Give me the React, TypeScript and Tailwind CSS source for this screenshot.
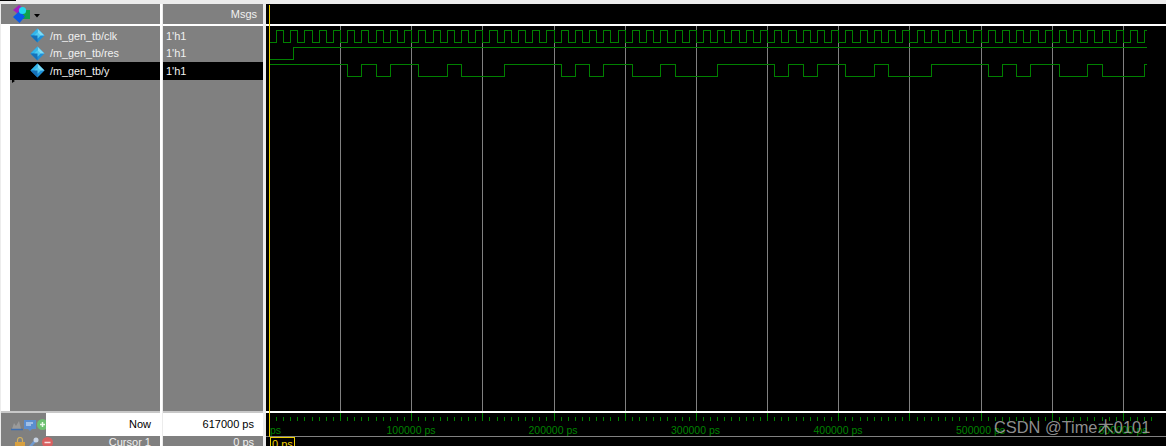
const T0 = 269.3;
const HALF = 7.118;
const END = 1146.5;

const px = (v: number) => Math.floor(v) + 0.5;

// builds a step path from a start level and the x of every toggle
function stepPath(toggles: number[], hi: number, lo: number, startHigh: boolean) {
  let high = startHigh;
  let d = `M${px(T0)} ${high ? hi : lo}`;
  for (const x of toggles) {
    if (x >= END) break;
    d += `H${px(x)}`;
    high = !high;
    d += `V${high ? hi : lo}`;
  }
  return d + `H${px(END)}`;
}

const clkToggles = Array.from({ length: 124 }, (_, i) => T0 + HALF * (i + 1));

// y output repeats every 15 clocks
const yPattern = [0, 1, 2, 3, 5, 7, 8, 11];
const yToggles: number[] = [];
for (let n = 0; n < 5; n++) {
  for (const k of yPattern) {
    yToggles.push(T0 + HALF * 2 * (5.5 + k + n * 15));
  }
}

const gridLines = Array.from({ length: 12 }, (_, i) => px(T0 + 71.18 * (i + 1)));
const rulerTicks = Array.from({ length: 124 }, (_, i) => i);
const rulerLabels = [
  { x: 411, text: "100000 ps" },
  { x: 553, text: "200000 ps" },
  { x: 695.5, text: "300000 ps" },
  { x: 838, text: "400000 ps" },
  { x: 980.5, text: "500000 ps" },
  { x: 1123, text: "600000 ps" },
];

const signals = [
  { name: "/m_gen_tb/clk", value: "1'h1", selected: false },
  { name: "/m_gen_tb/res", value: "1'h1", selected: false },
  { name: "/m_gen_tb/y", value: "1'h1", selected: true },
];

function SignalIcon() {
  return (
    <svg width="15" height="15" viewBox="0 0 16 16" className="shrink-0">
      <path d="M8 0.5L15.5 8L8 15.5L0.5 8Z" fill="#1d8fd8" />
      <path d="M8 0.5L15.5 8L8 8Z" fill="#7fdcf5" />
      <path d="M0.5 8L8 0.5L8 8Z" fill="#33b5ea" />
      <path d="M4.5 8L8 4.5L11.5 8L8 11.5Z" fill="#4fc8f0" />
      <path d="M8 15.5L0.5 8L8 8Z" fill="#1670b8" />
    </svg>
  );
}

function HeaderIcon() {
  return (
    <div className="flex items-center gap-[4px]">
      <svg width="18" height="18" viewBox="0 0 18 18">
        <path d="M7 0L12 4L6 9L1 5Z" fill="#a020c0" />
        <rect x="10" y="5" width="8" height="9" fill="#12a04a" />
        <path d="M7.5 6L13 11.5L7.5 18L1 12Z" fill="#0a5ae8" />
        <circle cx="10.5" cy="5.5" r="3.6" fill="#22d8f0" />
      </svg>
      <svg width="6" height="4" viewBox="0 0 6 4" className="mt-[3px]">
        <path d="M0 0H6L3 3.5Z" fill="#000" />
      </svg>
    </div>
  );
}

function NowIcons() {
  return (
    <div className="flex items-center pl-[10px] gap-[1px]">
      <svg width="12" height="12" viewBox="0 0 12 12">
        <path d="M1 10L3 4L5 7L8 2L10 10Z" fill="#9a9a9a" />
        <path d="M0 10.5H12" stroke="#3f6fb0" strokeWidth="1.5" />
      </svg>
      <svg width="12" height="12" viewBox="0 0 12 12">
        <rect x="0" y="1" width="12" height="9" fill="#5b8ed0" />
        <path d="M2 4H9M2 6H7" stroke="#e8f0fa" />
        <path d="M4 10H8L6 12Z" fill="#5b8ed0" />
      </svg>
      <svg width="11" height="11" viewBox="0 0 11 11">
        <circle cx="5.5" cy="5.5" r="5.5" fill="#6cc070" />
        <path d="M3 5.5H8M5.5 3V8" stroke="#e8f8e8" strokeWidth="1.5" />
      </svg>
    </div>
  );
}

function CursorIcons() {
  return (
    <div className="flex items-start pl-[14px] gap-[3px] pt-[1px]">
      <svg width="10" height="12" viewBox="0 0 10 12">
        <path d="M2.5 5V3a2.5 2.5 0 0 1 5 0V5" fill="none" stroke="#d0b060" strokeWidth="1.2" />
        <rect x="0" y="5" width="10" height="7" fill="#d8a040" />
      </svg>
      <svg width="11" height="12" viewBox="0 0 11 12">
        <path d="M1 11L7 4" stroke="#6f9ad0" strokeWidth="2.5" />
        <circle cx="8" cy="3" r="2.5" fill="#c8d4e4" />
      </svg>
      <svg width="11" height="11" viewBox="0 0 11 11">
        <circle cx="5.5" cy="5.5" r="5.5" fill="#d86060" />
        <path d="M2.5 5.5H8.5" stroke="#f8e0e0" strokeWidth="1.5" />
      </svg>
    </div>
  );
}

function Wave() {
  return (
    <svg width="900" height="385" viewBox="266 26 900 385" className="block" shapeRendering="crispEdges">
      {gridLines.map((x) => (
        <path key={x} d={`M${x} 26V411`} stroke="#808080" fill="none" />
      ))}
      <path d={stepPath(clkToggles, 30.5, 42.5, false)} stroke="#008000" fill="none" />
      <path d={stepPath([293], 47.5, 59.5, false)} stroke="#008000" fill="none" />
      <path d={stepPath(yToggles, 64.5, 76.5, true)} stroke="#008000" fill="none" />
      <path d="M269.5 37V42M269.5 55V60M269.5 68V73" stroke="#b03010" fill="none" />
    </svg>
  );
}

function Ruler() {
  return (
    <svg width="900" height="23" viewBox="266 413 900 23" className="block" style={{ fontFamily: "'Liberation Sans', sans-serif" }}>
      {rulerTicks.map((i) => {
        const x = px(T0 + 7.118 * (i + 1));
        const major = (i + 1) % 10 === 0;
        return <path key={i} d={`M${x} ${major ? 413 : 417}V421`} stroke="#008000" fill="none" shapeRendering="crispEdges" />;
      })}
      <text x="270" y="434" fontSize="10.5" fill="#008000">ps</text>
      {rulerLabels.map((l) => (
        <text key={l.text} x={l.x} y="434" fontSize="10.5" textAnchor="middle" fill="#008000">
          {l.text}
        </text>
      ))}
    </svg>
  );
}

export default function App() {
  return (
    <div className="w-[1166px] h-[446px] overflow-hidden relative flex flex-col bg-[#ececec] font-['Liberation_Sans',sans-serif] text-[11px]">
      <div className="h-[4px] shrink-0">
        <div className="h-px w-[16px] bg-black" />
      </div>
      <div className="flex h-[442px]">
        {/* names column */}
        <div className="w-[159px] ml-[1px] flex flex-col shrink-0">
          <div className="h-[20px] bg-[#808080] pl-[11px] flex items-center shrink-0">
            <HeaderIcon />
          </div>
          <div className="h-[2px] bg-white shrink-0" />
          <div className="h-[385px] flex shrink-0">
            <div className="w-[9px] bg-white shrink-0" />
            <div className="flex-1 bg-[#808080] pt-[1px] relative">
              {signals.map((s) => (
                <div key={s.name} className={`h-[17.5px] flex items-center pl-[20px] gap-[5px] text-[#f0f0f0] ${s.selected ? "bg-black" : ""}`}>
                  <SignalIcon />
                  <span className="text-[10.8px]">{s.name}</span>
                </div>
              ))}
              <div className="absolute left-[2px] top-[53px] w-0 h-0 border-y-[2px] border-y-transparent border-l-[3px] border-l-black" />
            </div>
          </div>
          <div className="h-[2px] bg-[#c8c8c8] shrink-0" />
          <div className="h-[23px] flex shrink-0">
            <div className="w-[45px] bg-[#808080] shrink-0 flex items-center">
              <NowIcons />
            </div>
            <div className="flex-1 bg-white text-black flex items-center justify-end pr-[9px]">Now</div>
          </div>
          <div className="h-[10px] flex bg-[#808080]">
            <CursorIcons />
            <div className="flex-1 text-[#f0f0f0] text-right pr-[9px] leading-[13px]">Cursor 1</div>
          </div>
        </div>

        <div className="w-[2px] bg-white shrink-0" />

        {/* values column */}
        <div className="w-[100px] ml-px flex flex-col shrink-0">
          <div className="h-[20px] bg-[#808080] flex items-center justify-end pr-[6px] text-[#f0f0f0] shrink-0">Msgs</div>
          <div className="h-[2px] bg-white shrink-0" />
          <div className="h-[385px] bg-[#808080] pt-[1px] shrink-0">
            {signals.map((s) => (
              <div key={s.name} className={`h-[17.5px] flex items-center pl-[3px] text-[#f0f0f0] ${s.selected ? "bg-black" : ""}`}>
                {s.value}
              </div>
            ))}
          </div>
          <div className="h-[2px] bg-[#c8c8c8] shrink-0" />
          <div className="h-[23px] bg-white text-black flex items-center justify-end pr-[9px] shrink-0">617000 ps</div>
          <div className="h-[10px] bg-[#808080] text-[#f0f0f0] text-right pr-[9px] leading-[13px]">0 ps</div>
        </div>

        <div className="w-[3px] shrink-0" />

        {/* wave column */}
        <div className="flex-1 flex flex-col relative min-w-0 bg-black">
          <div className="h-[20px] bg-black shrink-0" />
          <div className="h-[2px] bg-white shrink-0" />
          <div className="h-[385px] shrink-0">
            <Wave />
          </div>
          <div className="h-[2px] bg-white shrink-0" />
          <div className="h-[23px] shrink-0">
            <Ruler />
          </div>
          <div className="h-px bg-[#808080] shrink-0" />
          <div className="absolute left-[3px] top-px bottom-[9px] w-px bg-[#f0d000]" />
          <div className="absolute left-[4px] top-[433px] w-[25px] h-[12px] border border-[#f0d000] text-[#f0d000] pl-px leading-[12px]">0 ps</div>
        </div>
      </div>

      <div className="absolute left-[994px] top-[417px] text-[16.4px] leading-[20px] whitespace-nowrap text-[#b4b4b4]/80 font-['Liberation_Sans','Noto_Sans_CJK_SC',sans-serif]">
        CSDN @Time木0101
      </div>
    </div>
  );
}
